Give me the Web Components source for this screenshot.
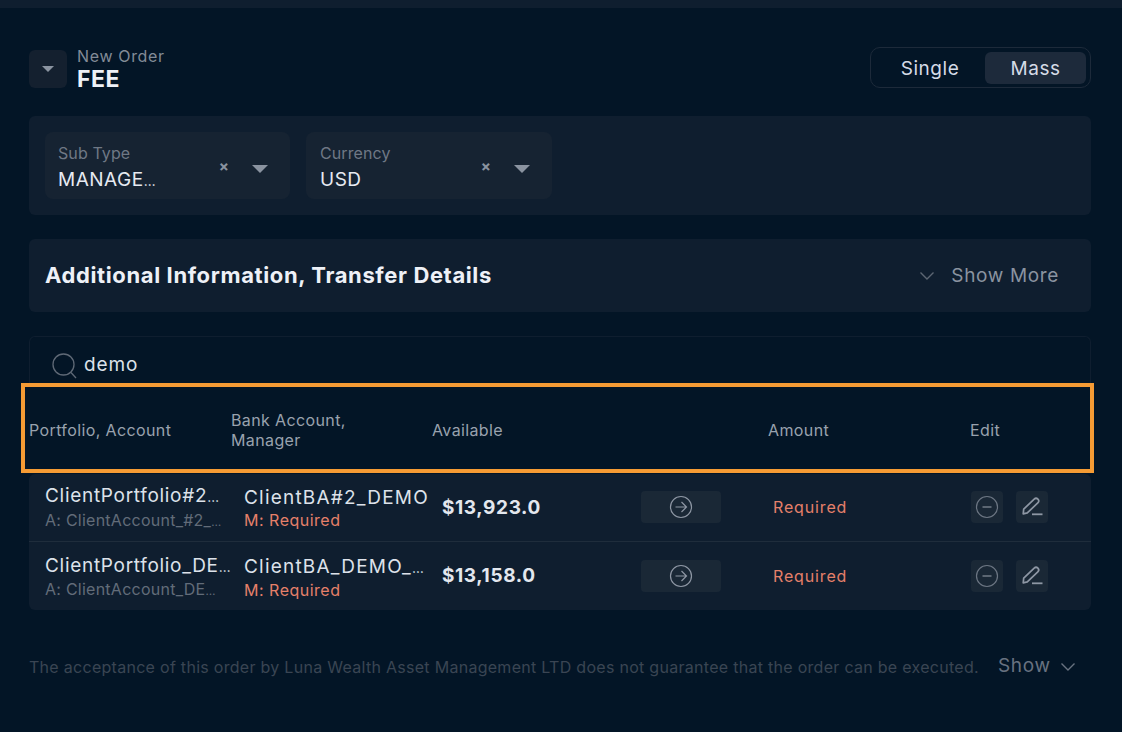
<!DOCTYPE html>
<html>
<head>
<meta charset="utf-8">
<style>
  html, body { margin: 0; height: 100%; background: #031526; }
  body { font-family: Inter, "Liberation Sans", sans-serif; overflow: hidden; }
</style>
</head>
<body>
<order-page></order-page>
<script>
const chevron = `<svg width="16" height="10" viewBox="0 0 16 10" fill="none"><path d="M1.5 1.5L8 8l6.5-6.5" stroke="currentColor" stroke-width="1.4"/></svg>`;
const caret = `<svg width="16" height="8" viewBox="0 0 16 8"><path d="M0 0h16L8 8z" fill="#8a93a0"/></svg>`;
// the ellipsis in the original font is much narrower than Inter's
const dots = (s) => s.replace("…", `<span style="font-size:.72em;letter-spacing:0">…</span>`);

class OrderHeader extends HTMLElement {
  constructor() {
    super();
    this.attachShadow({ mode: "open" }).innerHTML = `
      <style>
        :host { display: flex; align-items: flex-start; justify-content: space-between; height: 41px; }
        .left { display: flex; align-items: flex-start; gap: 10px; height: 41px; }
        .drop { width: 38px; height: 38px; margin-top: 3px; border-radius: 6px; background: #14202f; display: flex; align-items: center; justify-content: center; }
        .drop svg { width: 12px; height: 6px; }
        .names { margin-top: -1px; }
        .sub { font-size: 16px; line-height: 20px; color: #828b97; letter-spacing: .65px; }
        .title { font-size: 23px; line-height: 26px; font-weight: 700; color: #eef1f7; letter-spacing: .5px; }
        .toggle { box-sizing: border-box; width: 221px; height: 41px; border: 1px solid #1d2a3a; border-radius: 10px; display: flex; align-items: center; padding: 0 4px; color: #d5dbe6; font-size: 19px; letter-spacing: .55px; }
        .toggle span { height: 32px; padding-top: 1px; box-sizing: border-box; display: flex; align-items: center; justify-content: center; border-radius: 6px; }
        .single { width: 110px; }
        .mass { width: 101px; background: #1d2a3b; }
      </style>
      <div class="left">
        <div class="drop">${caret}</div>
        <div class="names"><div class="sub">New Order</div><div class="title">FEE</div></div>
      </div>
      <div class="toggle"><span class="single">Single</span><span class="mass">Mass</span></div>`;
  }
}

class SelectField extends HTMLElement {
  constructor() {
    super();
    this.attachShadow({ mode: "open" }).innerHTML = `
      <style>
        :host { display: flex; box-sizing: border-box; height: 67px; padding: 11px 22px 0 13px; border-radius: 8px; background: #162332; }
        .text { flex: 1; }
        .label { font-size: 16px; line-height: 20px; color: #6f7885; letter-spacing: .1px; }
        .value { margin-top: 4px; font-size: 19px; line-height: 26px; color: #e6eaf1; letter-spacing: .5px; }
        .x { font-size: 15px; font-weight: 700; line-height: 20px; color: #8a93a0; margin: 14px 23px 0 0; }
        svg { margin-top: 22px; }
      </style>
      <div class="text"><div class="label">${this.getAttribute("label")}</div><div class="value">${dots(this.getAttribute("value"))}</div></div>
      <span class="x">×</span>${caret}`;
  }
}

class TableRow extends HTMLElement {
  constructor() {
    super();
    const a = (n) => this.getAttribute(n);
    this.attachShadow({ mode: "open" }).innerHTML = `
      <style>
        :host { display: grid; box-sizing: border-box; grid-template-columns: 199px 198px 199px 132px 198px 1fr; align-items: center; height: 67px; padding: 0 0 1px 16px; }
        .cell { padding-top: 3px; }
        :host(:last-child) .cell { padding-top: 4px; }
        :host(:last-child) .sub { margin-top: -1px; }
        .main { font-size: 19px; line-height: 23px; color: #dde2ea; letter-spacing: 1.2px; white-space: nowrap; }
        .portfolio { letter-spacing: .7px; }
        .sub { font-size: 16px; line-height: 22px; color: #626c79; white-space: nowrap; letter-spacing: .25px; }
        .req { color: #e5806a; letter-spacing: .5px; }
        .amt { font-size: 19px; font-weight: 700; color: #e3e7ee; letter-spacing: .62px; }
        .req-amount { font-size: 16px; color: #e5806a; letter-spacing: .85px; }
        .btn { height: 32px; border-radius: 4px; background: #1a2836; display: flex; align-items: center; justify-content: center; }
        .go { width: 80px; }
        .sq { width: 32px; }
        .edit { display: flex; gap: 13px; }
      </style>
      <div class="cell"><div class="main portfolio">${dots(a("portfolio"))}</div><div class="sub">${dots(a("account"))}</div></div>
      <div class="cell"><div class="main">${dots(a("bank"))}</div><div class="sub req">M: Required</div></div>
      <div class="amt">${a("amount")}</div>
      <div class="btn go"><svg width="24" height="24" viewBox="0 0 24 24" fill="none" stroke="#8e97a4" stroke-width="1.2"><circle cx="12" cy="12" r="10.5"/><path d="M6.5 12h11M12.5 7l5 5-5 5"/></svg></div>
      <div class="req-amount">Required</div>
      <div class="edit">
        <div class="btn sq"><svg width="24" height="24" viewBox="0 0 24 24" fill="none" stroke="#6c7683" stroke-width="1.2"><circle cx="12" cy="12" r="10.5"/><path d="M7.5 12h9" stroke-width="1.6"/></svg></div>
        <div class="btn sq"><svg width="24" height="24" viewBox="0 0 24 24" fill="none" stroke="#8e97a4" stroke-width="1.7"><path d="M3.7 14.1L14.2 4.1a2.6 2.6 0 0 1 3.6 3.8L7.3 17.9l-4.1.9z" stroke-linejoin="round"/><path d="M12 19.3h10.5" stroke-width="1.8"/></svg></div>
      </div>`;
  }
}

class OrderPage extends HTMLElement {
  constructor() {
    super();
    this.attachShadow({ mode: "open" }).innerHTML = `
      <style>
        :host { display: block; position: relative; height: 732px; color: #e6eaf1; }
        .topbar { height: 8px; background: #0f1e2f; }
        main { padding: 39px 31px 0 29px; }
        .card { background: #0f1e2f; border-radius: 6px; }
        .filters { display: flex; gap: 16px; margin-top: 28px; height: 99px; box-sizing: border-box; padding: 16px; }
        .filters select-field:first-child { width: 245px; }
        .filters select-field:last-child { width: 246px; padding-left: 14px; }
        .info { display: flex; box-sizing: border-box; align-items: center; justify-content: space-between; height: 73px; margin-top: 24px; padding: 0 32px 1px 16px; }
        .info h2 { margin: 0; font-size: 22px; font-weight: 700; color: #eef1f7; letter-spacing: .62px; }
        .more { display: flex; align-items: center; gap: 16px; color: #8a93a0; font-size: 19px; letter-spacing: .65px; }
        .more svg { color: #5c6673; margin-top: 2px; }
        .search { box-sizing: border-box; height: 48px; margin-top: 24px; border: 1px solid #0f1e2f; border-bottom: 0; border-radius: 6px 6px 0 0; padding: 15px 0 0 22px; display: flex; gap: 6px; font-size: 19px; line-height: 26px; letter-spacing: .9px; color: #dde2ea; }
        .search svg { flex: none; }
        .cols { display: grid; grid-template-columns: 202px 201px 336px 202px 1fr; align-items: center; height: 90px; padding-top: 2px; box-sizing: border-box; color: #99a2ae; font-size: 16px; line-height: 20px; letter-spacing: .38px; }
        .rows table-row + table-row { border-top: 1px solid #1f2d3c; height: 69px; }
        .disclaimer { display: flex; align-items: center; margin-top: 46px; font-size: 16px; color: #3a4553; white-space: nowrap; letter-spacing: .285px; }
        .show { display: flex; align-items: center; gap: 9px; margin-left: 19px; margin-top: -2px; color: #687280; font-size: 19px; letter-spacing: .7px; }
        .show svg { margin-top: 2px; }
        .highlight { position: absolute; left: 21px; top: 383px; width: 1073px; height: 90px; box-sizing: border-box; border: 4px solid #f59b34; pointer-events: none; }
      </style>
      <div class="topbar"></div>
      <main>
        <order-header></order-header>
        <section class="card filters">
          <select-field label="Sub Type" value="MANAGE…"></select-field>
          <select-field label="Currency" value="USD"></select-field>
        </section>
        <section class="card info">
          <h2>Additional Information, Transfer Details</h2>
          <div class="more">${chevron}<span>Show More</span></div>
        </section>
        <div class="search">
          <svg width="26" height="28" viewBox="0 0 26 28" fill="none" stroke="#5f6976" stroke-width="1.3"><circle cx="11.5" cy="12.5" r="10.5"/><path d="M19 20.5l5 5.5"/></svg>
          <span>demo</span>
        </div>
        <div class="cols">
          <span>Portfolio, Account</span>
          <span>Bank Account,<br>Manager</span>
          <span>Available</span>
          <span>Amount</span>
          <span>Edit</span>
        </div>
        <section class="card rows">
          <table-row portfolio="ClientPortfolio#2…" account="A: ClientAccount_#2_…" bank="ClientBA#2_DEMO" amount="$13,923.0"></table-row>
          <table-row portfolio="ClientPortfolio_DE…" account="A: ClientAccount_DE…" bank="ClientBA_DEMO_…" amount="$13,158.0"></table-row>
        </section>
        <div class="disclaimer">
          <span>The acceptance of this order by Luna Wealth Asset Management LTD does not guarantee that the order can be executed.</span>
          <span class="show">Show ${chevron}</span>
        </div>
      </main>
      <div class="highlight"></div>`;
  }
}

customElements.define("order-header", OrderHeader);
customElements.define("select-field", SelectField);
customElements.define("table-row", TableRow);
customElements.define("order-page", OrderPage);
</script>
</body>
</html>
